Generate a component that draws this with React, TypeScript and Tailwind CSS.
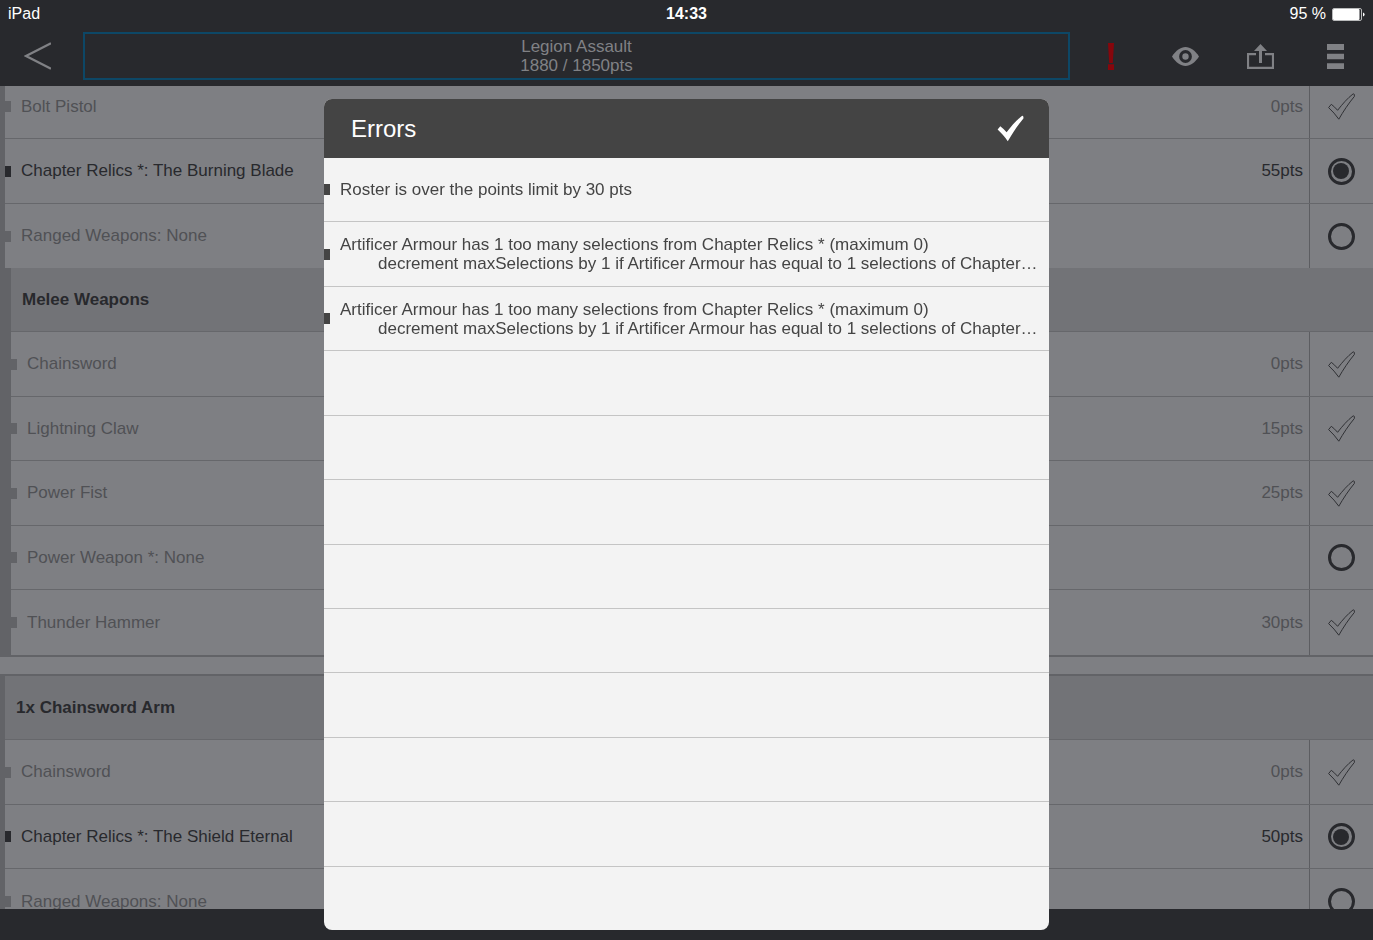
import { useState } from "react";

interface RowData {
  name: string;
  points?: string;
  kind: "check" | "radio";
  selected?: boolean;
}

const armourRows: RowData[] = [
  { name: "Bolt Pistol", points: "0pts", kind: "check" },
  {
    name: "Chapter Relics *: The Burning Blade",
    points: "55pts",
    kind: "radio",
    selected: true,
  },
  { name: "Ranged Weapons: None", kind: "radio" },
];

const meleeRows: RowData[] = [
  { name: "Chainsword", points: "0pts", kind: "check" },
  { name: "Lightning Claw", points: "15pts", kind: "check" },
  { name: "Power Fist", points: "25pts", kind: "check" },
  { name: "Power Weapon *: None", kind: "radio" },
  { name: "Thunder Hammer", points: "30pts", kind: "check" },
];

const armRows: RowData[] = [
  { name: "Chainsword", points: "0pts", kind: "check" },
  {
    name: "Chapter Relics *: The Shield Eternal",
    points: "50pts",
    kind: "radio",
    selected: true,
  },
  { name: "Ranged Weapons: None", kind: "radio" },
];

const relicError = [
  "Artificer Armour has 1 too many selections from Chapter Relics * (maximum 0)",
  "decrement maxSelections by 1 if Artificer Armour has equal to 1 selections of Chapter…",
];

const errors: string[][] = [
  ["Roster is over the points limit by 30 pts"],
  relicError,
  relicError,
];

const TOTAL_ERROR_ROWS = 12;

function CheckIcon({ className }: { className: string }) {
  return (
    <svg className={className} viewBox="0 0 27 27">
      <path d="M.6 14.6 3.3 11.3Q6.8 14 9.6 17.3C14.5 11 19.5 5.2 25.2.8Q26.8.6 26.4 3.4C20.4 10.6 15.2 18.6 10.8 26.2 7.8 22 4.4 18 .6 14.6Z" />
    </svg>
  );
}

function OptionRow({ row, id }: { row: RowData; id: string }) {
  const [on, setOn] = useState(!!row.selected);

  return (
    <li className="flex items-stretch border-b border-[#66676b] last:border-b-0 odd:h-16 even:h-[65px]">
      <div
        className={`flex flex-1 items-center pr-1.5 ${
          row.selected ? "text-[#28292d]" : "text-[#505155]"
        }`}
      >
        <span
          className={`mr-2.5 h-[11px] w-1.5 ${
            row.selected ? "bg-[#28292d]" : "bg-[#626367]"
          }`}
        />
        <label htmlFor={id} className="flex-1">
          {row.name}
        </label>
        <span>{row.points}</span>
      </div>
      <div className="flex w-16 items-center justify-center border-l border-[#5c5d61] pr-px">
        {row.kind === "radio" ? (
          <input
            id={id}
            type="radio"
            checked={on}
            onChange={() => setOn(true)}
            className="grid size-[27px] appearance-none place-items-center rounded-full border-3 border-[#28292d] checked:before:size-4 checked:before:rounded-full checked:before:bg-[#28292d]"
          />
        ) : (
          <span className="relative size-[27px]">
            <input
              id={id}
              type="checkbox"
              checked={on}
              onChange={(e) => setOn(e.target.checked)}
              className="absolute inset-0 appearance-none peer"
            />
            <CheckIcon className="pointer-events-none size-[27px] fill-none stroke-[#303135] peer-checked:fill-[#28292d]" />
          </span>
        )}
      </div>
    </li>
  );
}

function GroupTitle({ title }: { title: string }) {
  return (
    <li className="flex h-16 items-center border-b border-[#66676b] bg-[#727377] pl-[11px] font-bold text-[#28292d]">
      {title}
    </li>
  );
}

function StatusBar() {
  return (
    <div className="grid h-7 grid-cols-3 items-center px-2 text-base text-white">
      <span>iPad</span>
      <span className="text-center font-bold">14:33</span>
      <span className="flex items-center justify-end gap-1.5">
        95 %
        <svg className="h-[13px] w-[33px]" viewBox="0 0 33 13">
          <rect x=".5" y=".5" width="29" height="12" rx="1.5" fill="none" stroke="#b9babb" />
          <rect x="1" y="1" width="26.5" height="11" rx="1" fill="#fff" />
          <path d="M31 4.5Q32.6 5 32.6 6.5T31 8.5Z" fill="#fff" />
        </svg>
      </span>
    </div>
  );
}

function NavBar() {
  const button = "flex w-[75px] items-center justify-center cursor-pointer";

  return (
    <header className="flex h-[58px] items-stretch pb-0.5 text-[#808185]">
      <button className={button} aria-label="Back">
        <svg className="h-7 w-[27px]" viewBox="0 0 27 28">
          <path d="M27 1.2 2 14 27 26.8" fill="none" stroke="currentColor" strokeWidth="2.4" />
        </svg>
      </button>
      <button className="mr-[3px] ml-2 my-1 flex-1 cursor-pointer border-2 border-[#0d4766] text-center leading-[19px]">
        Legion Assault
        <br />
        1880 / 1850pts
      </button>
      <button className={button} aria-label="Errors">
        <svg className="h-[27px] w-1.5" viewBox="0 0 6 27" fill="#87060c">
          <path d="M0 0H6L4.8 20H1.2ZM0 21.2H6V27H0Z" />
        </svg>
      </button>
      <button className={button} aria-label="View">
        <svg className="h-[19px] w-[27px]" viewBox="0 0 27 19">
          <path d="M0 9.5C4 3.4 8.6 0 13.5 0S23 3.4 27 9.5C23 15.6 18.4 19 13.5 19S4 15.6 0 9.5Z" fill="currentColor" />
          <circle cx="13.5" cy="9.5" r="4.8" fill="none" stroke="#28292d" strokeWidth="3.2" />
        </svg>
      </button>
      <button className={button} aria-label="Share">
        <svg className="h-[25px] w-[27px]" viewBox="0 0 27 25">
          <path d="M9 10.2H1V23.8H26V10.2H18" fill="none" stroke="currentColor" strokeWidth="2.2" />
          <path d="M13.5 0 20 7H15V19H12V7H7Z" fill="currentColor" />
        </svg>
      </button>
      <button className={button} aria-label="Menu">
        <svg className="h-[25px] w-[17px]" viewBox="0 0 17 25" fill="currentColor">
          <path d="M0 0H17V6H0ZM0 9.7H17V15.2H0ZM0 19.2H17V25H0Z" />
        </svg>
      </button>
    </header>
  );
}

function ErrorsModal({ onClose }: { onClose: () => void }) {
  const blankRows = Array.from({ length: TOTAL_ERROR_ROWS - errors.length });

  return (
    <div className="fixed inset-0 z-50 flex justify-center pt-[99px] pb-[10px]">
      <div className="flex w-full max-w-[725px] flex-col overflow-hidden rounded-lg bg-[#f3f3f3] text-[#444]">
        <div className="flex h-[59px] shrink-0 items-center justify-between bg-[#444] pr-[25px] pl-[27px] text-white">
          <h2 className="text-2xl">Errors</h2>
          <button onClick={onClose} className="cursor-pointer" aria-label="Close">
            <CheckIcon className="size-[27px] fill-white" />
          </button>
        </div>
        <ul className="flex flex-1 flex-col">
          {errors.map((lines, i) => (
            <li key={i} className="flex flex-1 items-center border-b border-[#c4c4c4]">
              <span className="mr-2.5 h-[11px] w-1.5 bg-[#444]" />
              <div className="leading-[19px]">
                <p>{lines[0]}</p>
                {lines[1] && <p className="pl-[38px] whitespace-nowrap">{lines[1]}</p>}
              </div>
            </li>
          ))}
          {blankRows.map((_, i) => (
            <li key={i} className="flex-1 border-b border-[#c4c4c4] last:border-b-0" />
          ))}
        </ul>
      </div>
    </div>
  );
}

export default function App() {
  const [showErrors, setShowErrors] = useState(true);

  return (
    <div className="flex h-screen flex-col bg-[#28292d] font-['Liberation_Sans',Arial,sans-serif] text-[17px]">
      <StatusBar />
      <NavBar />
      <main className="flex-1 overflow-hidden bg-[#7e7f83]">
        {/* list is scrolled part way into the first row */}
        <ul className="-mt-[11px] border-l-5 border-[#626367]">
          {armourRows.map((row, i) => (
            <OptionRow key={i} row={row} id={`armour-${i}`} />
          ))}
        </ul>
        <ul className="border-b-2 border-l-11 border-[#626367]">
          <GroupTitle title="Melee Weapons" />
          {meleeRows.map((row, i) => (
            <OptionRow key={i} row={row} id={`melee-${i}`} />
          ))}
        </ul>
        <ul className="mt-[17px] border-t-2 border-l-5 border-[#626367]">
          <GroupTitle title="1x Chainsword Arm" />
          {armRows.map((row, i) => (
            <OptionRow key={i} row={row} id={`arm-${i}`} />
          ))}
        </ul>
      </main>
      <footer className="h-[31px]" />
      {showErrors && <ErrorsModal onClose={() => setShowErrors(false)} />}
    </div>
  );
}
